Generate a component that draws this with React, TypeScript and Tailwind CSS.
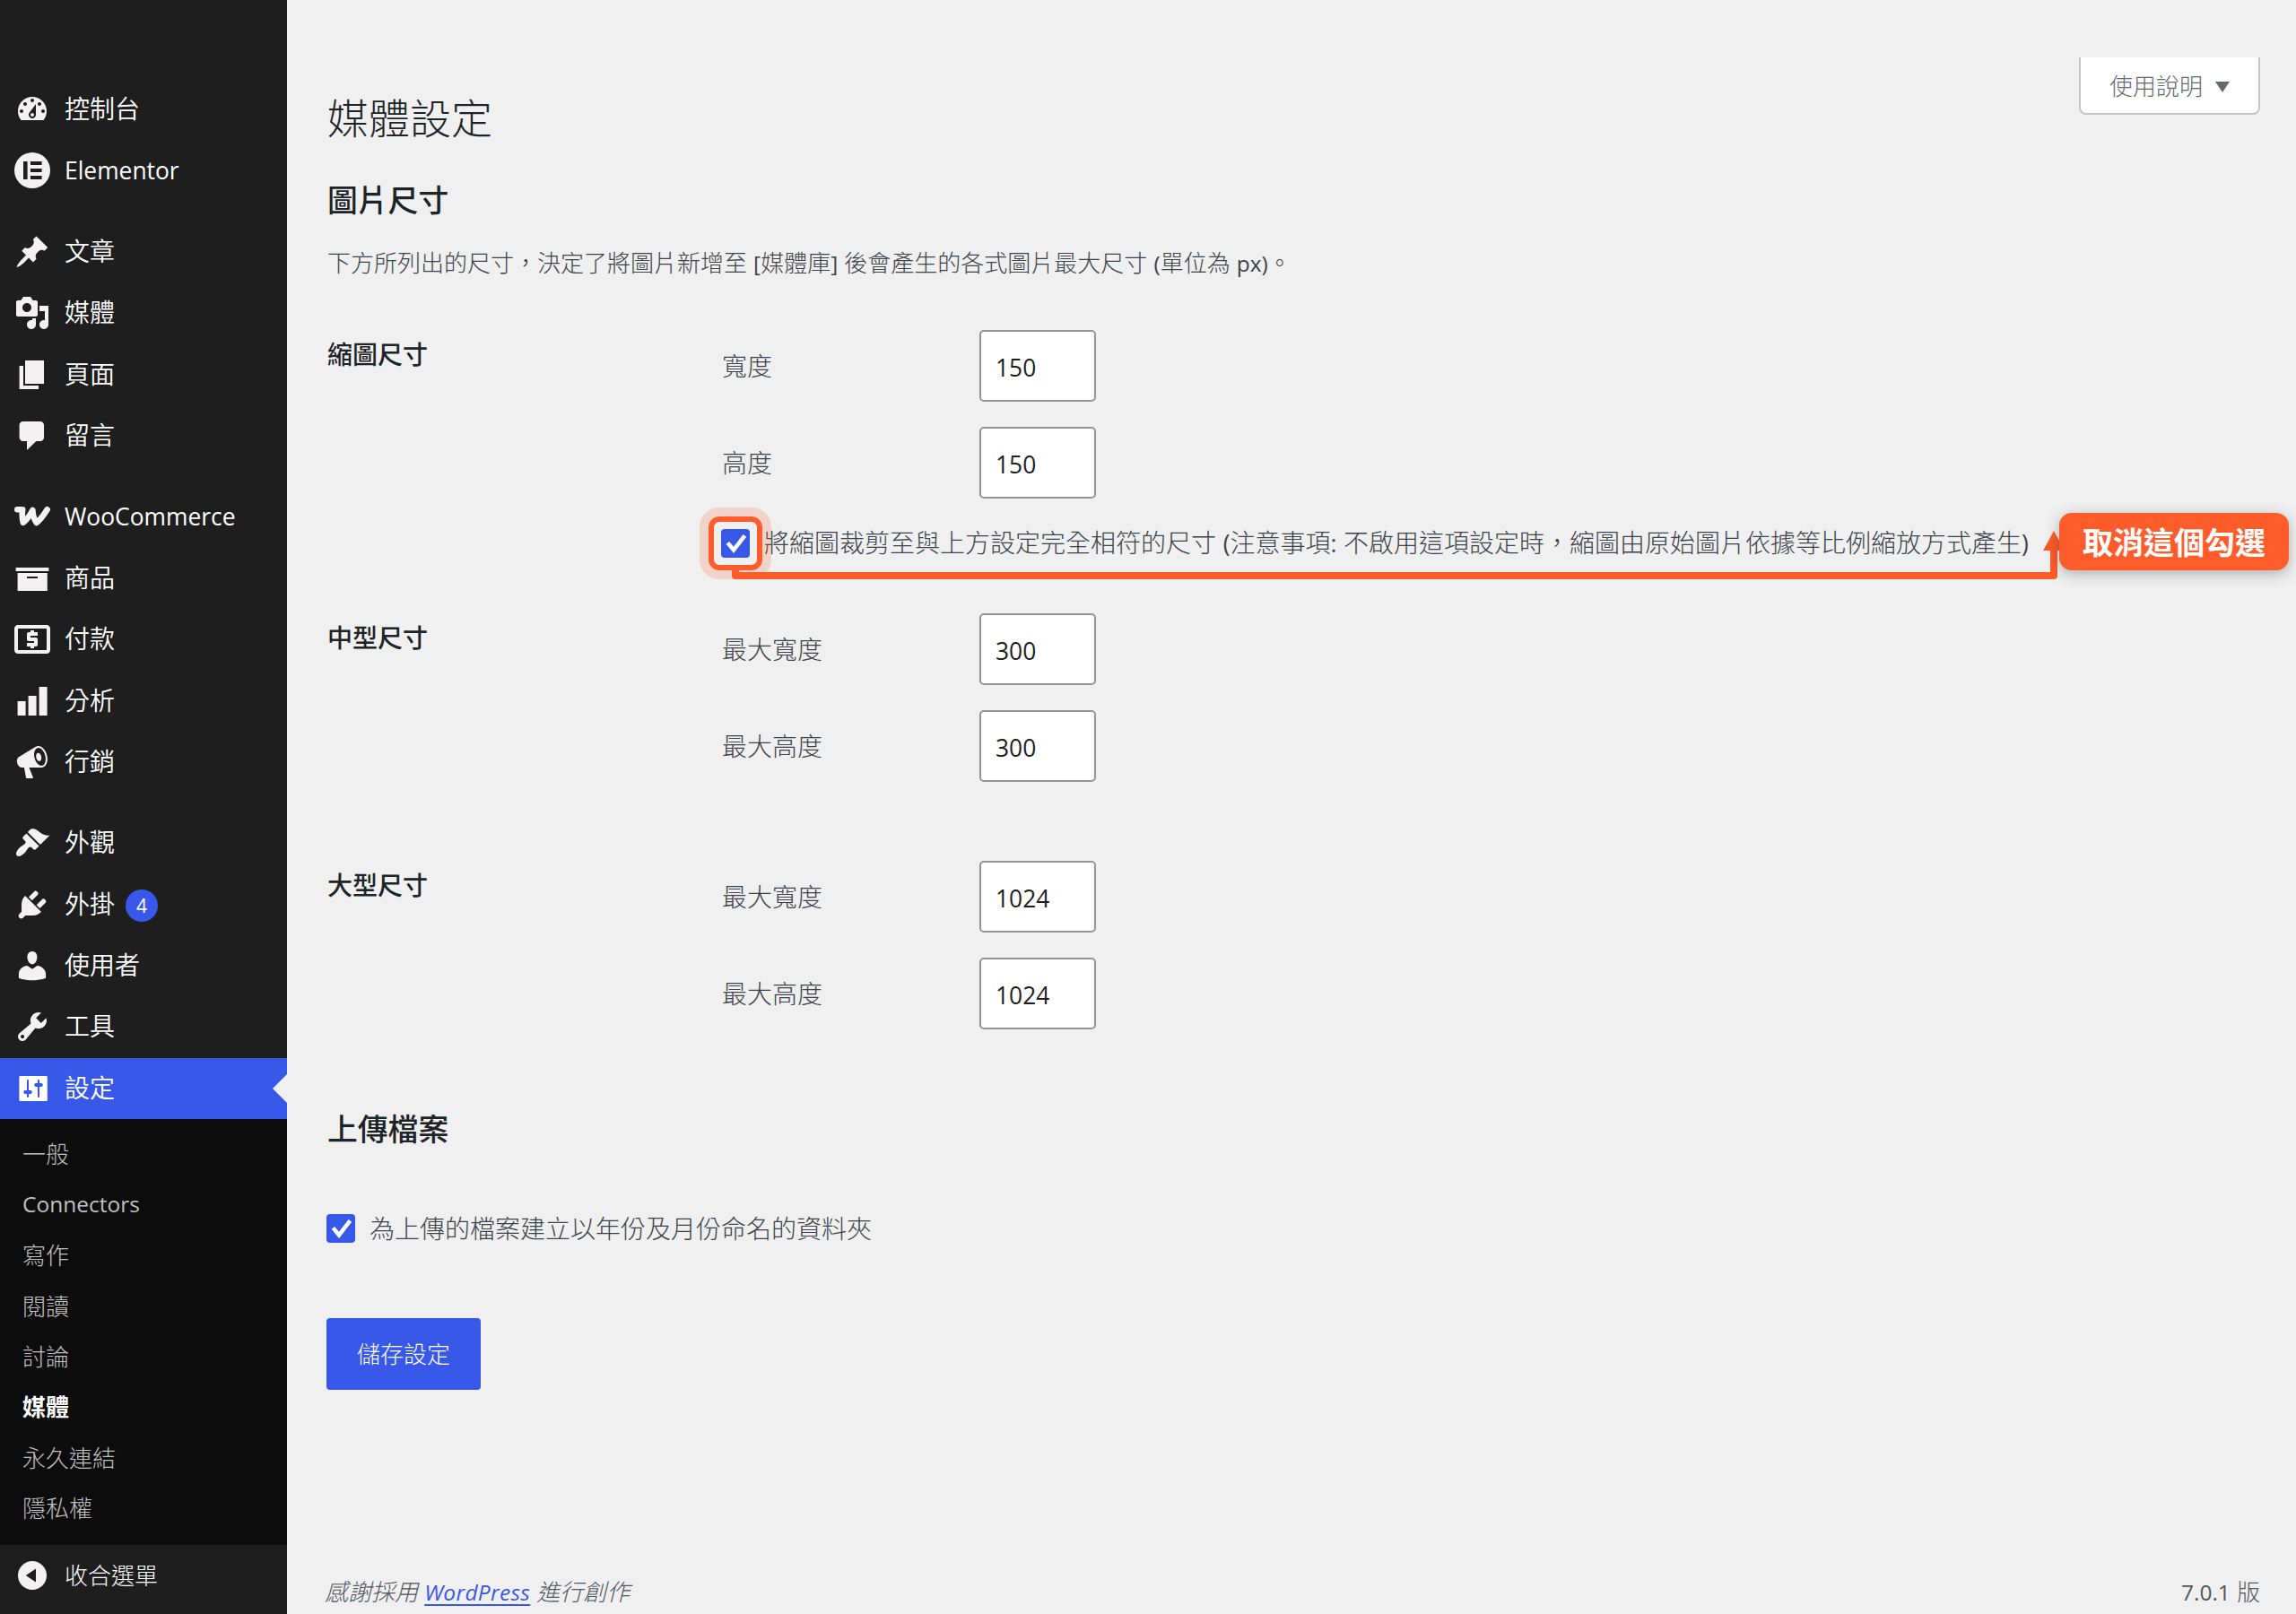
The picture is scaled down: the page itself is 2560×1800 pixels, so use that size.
import React from "react";

const ICONS: Record<string, string> = {
  dashboard:
    "M3.76 16h12.48c1.1-1.37 1.76-3.11 1.76-5 0-4.42-3.58-8-8-8s-8 3.58-8 8c0 1.89.66 3.63 1.76 5zM10 4c.55 0 1 .45 1 1s-.45 1-1 1-1-.45-1-1 .45-1 1-1zM6 6c.55 0 1 .45 1 1s-.45 1-1 1-1-.45-1-1 .45-1 1-1zm8 0c.55 0 1 .45 1 1s-.45 1-1 1-1-.45-1-1 .45-1 1-1zm-5.37 5.55L12 7v6c0 1.1-.9 2-2 2s-2-.9-2-2c0-.57.24-1.08.63-1.45zM4 10c.55 0 1 .45 1 1s-.45 1-1 1-1-.45-1-1 .45-1 1-1zm12 0c.55 0 1 .45 1 1s-.45 1-1 1-1-.45-1-1 .45-1 1-1zm-5 3c0-.55-.45-1-1-1s-1 .45-1 1 .45 1 1 1 1-.45 1-1z",
  elementor:
    "M10 0a10 10 0 1 0 0 20 10 10 0 0 0 0-20zM5 5h2.3v10H5zM9 5h6.3v2H9zM9 9h6.3v2H9zM9 13h6.3v2H9z",
  post: "M10.44 3.02l1.82-1.82 6.36 6.35-1.83 1.82c-1.05-.68-2.48-.57-3.41.36l-.75.75c-.92.93-1.04 2.35-.35 3.41l-1.83 1.82-2.41-2.41-2.8 2.79c-.42.42-3.38 2.71-3.8 2.29s1.86-3.39 2.28-3.81l2.79-2.79L4.1 9.36l1.83-1.82c1.05.69 2.48.57 3.4-.36l.75-.75c.93-.92 1.05-2.35.36-3.41z",
  media:
    "M13 11V4c0-.55-.45-1-1-1h-1.67L9 1H5L3.67 3H2c-.55 0-1 .45-1 1v7c0 .55.45 1 1 1h10c.55 0 1-.45 1-1zM7 4.5c1.38 0 2.5 1.12 2.5 2.5S8.38 9.5 7 9.5 4.5 8.38 4.5 7 5.62 4.5 7 4.5zM14 6h5v10.5c0 1.38-1.12 2.5-2.5 2.5S14 17.88 14 16.5s1.12-2.5 2.5-2.5c.17 0 .34.02.5.05V9h-3V6zm-4 8.05V13h2v3.5c0 1.38-1.12 2.5-2.5 2.5S7 17.88 7 16.5 8.12 14 9.5 14c.17 0 .34.02.5.05z",
  page: "M6 15V2h10.5v13H6zm-1 1h8.5v2H2.8V5H5v11z",
  comments:
    "M4.8 2h9.7c1.1 0 2 .9 2 2v7c0 1.1-.9 2-2 2h-2.3l-5.2 5v-5H4.8c-1.1 0-2-.9-2-2V4c0-1.1.9-2 2-2z",
  archive: "M19.2 4v2H.8V4h18.4zM1.8 7h16.6v10H1.8V7zm11.2 3V9H7v1h6z",
  chart: "M18.3 18V2h-4.5v16h4.5zm-6 0V7H7.8v11h4.5zm-6 0v-8H1.8v8h4.5z",
  megaphone:
    "M18.15 5.94c.46 1.62.38 3.22-.02 4.48-.42 1.28-1.26 2.18-2.3 2.48-.16.06-.26.06-.4.06-.06.02-.12.02-.18.02-.06.02-.14.02-.22.02h-6.8l2.22 5.5c.02.14-.06.26-.14.34-.08.1-.24.16-.34.16H6.95c-.1 0-.26-.06-.34-.16-.08-.08-.16-.2-.14-.34l-1-5.5H4.25l-.02-.02c-.5.06-1.08-.18-1.54-.62s-.88-1.08-1.06-1.88c-.24-.8-.2-1.56-.02-2.2.18-.62.58-1.08 1.06-1.3l.02-.02 9-5.4c.1-.06.18-.1.24-.16.06-.04.14-.08.24-.12.16-.08.28-.12.5-.18 1.04-.3 2.24.1 3.22.98s1.84 2.24 2.26 3.86zm-2.58 5.98h-.02c.4-.1.74-.34 1.04-.7.58-.7.86-1.76.86-3.04 0-.64-.1-1.3-.28-1.98-.34-1.36-1.02-2.5-1.78-3.24s-1.68-1.1-2.46-.88c-.82.22-1.4.96-1.7 2-.32 1.04-.28 2.36.06 3.72.38 1.36 1 2.5 1.8 3.24.78.74 1.62 1.1 2.48.88zm-2.54-7.08c.22-.04.42-.02.62.04.38.16.76.48 1.02 1s.42 1.2.42 1.78c0 .3-.04.56-.12.8-.18.48-.44.84-.86.94-.34.1-.8-.06-1.14-.4s-.64-.86-.78-1.5c-.18-.62-.12-1.24.02-1.72s.48-.84.82-.94z",
  appearance:
    "M14.48 11.06L7.41 3.99l1.5-1.5c.5-.56 2.3-.47 3.51.32 1.21.8 1.43 1.28 2.91 2.1 1.18.64 2.45 1.26 4.45.85zm-.71.71L6.7 4.7 4.93 6.47c-.39.39-.39 1.02 0 1.41l1.06 1.06c.39.39.39 1.03 0 1.42-.6.6-1.43 1.11-2.21 1.69-.35.26-.7.53-1.01.84C1.43 14.23.4 16.08 1.4 17.07c.99 1 2.84-.03 4.18-1.36.31-.31.58-.66.85-1.02.57-.78 1.08-1.61 1.69-2.21.39-.39 1.02-.39 1.41 0l1.06 1.06c.39.39 1.02.39 1.41 0z",
  plugins:
    "M13.11 4.36L9.87 7.6 8 5.73l3.24-3.24c.35-.34 1.05-.2 1.56.32.52.51.66 1.21.31 1.55zm-8 1.77l.91-1.12 9.01 9.01-1.19.84c-.71.71-2.63 1.16-3.82 1.16H6.14L4.9 17.26c-.59.59-1.54.59-2.12 0-.59-.58-.59-1.53 0-2.12l1.24-1.24v-3.88c0-1.13.4-3.19 1.09-3.89zm7.26 3.97l3.24-3.24c.34-.35 1.04-.21 1.55.31.52.51.66 1.21.31 1.55l-3.24 3.25z",
  users:
    "M10 9.25c-2.27 0-2.73-3.44-2.73-3.44C7 4.02 7.82 2 9.97 2c2.16 0 2.98 2.02 2.71 3.81 0 0-.41 3.44-2.68 3.44zm0 2.57L12.72 10c2.39 0 4.82 2.33 4.82 4.53v2.49s-3.95 1.13-7.54 1.13c-3.65 0-7.54-1.13-7.54-1.13v-2.49c0-2.25 2.24-4.48 4.77-4.48z",
  tools:
    "M16.68 9.77c-1.34 1.34-3.3 1.67-4.95.99l-5.41 6.52c-.99.99-2.59.99-3.58 0s-.99-2.59 0-3.57l6.52-5.42c-.68-1.65-.35-3.61.99-4.95 1.28-1.28 3.12-1.62 4.72-1.06l-2.89 2.89 2.82 2.82 2.86-2.87c.53 1.58.18 3.39-1.08 4.65zM3.81 16.21c.4.39 1.04.39 1.43 0 .4-.4.4-1.04 0-1.43-.39-.4-1.03-.4-1.43 0-.39.39-.39 1.03 0 1.43z",
};

function MenuIcon({ name }: { name: string }) {
  if (name === "payments") {
    return (
      <svg viewBox="2 2 20 20" className="size-10 fill-[#f3f1f1]">
        <path d="M11 17h2v-1h1c.55 0 1-.45 1-1v-3c0-.55-.45-1-1-1h-3v-1h4V8h-2V7h-2v1h-1c-.55 0-1 .45-1 1v3c0 .55.45 1 1 1h3v1H9v2h2v1zm9-13H4c-1.11 0-1.99.89-1.99 2L2 18c0 1.11.89 2 2 2h16c1.11 0 2-.89 2-2V6c0-1.11-.89-2-2-2zm0 14H4V6h16v12z" />
      </svg>
    );
  }
  if (name === "woo") {
    return (
      <svg viewBox="0 0 40 40" className="size-10 fill-none stroke-[#f3f1f1]" strokeLinecap="round" strokeLinejoin="round" strokeWidth="6.6">
        <path d="M3.3 12.3H9.2Q8 19 9.8 26.8Q15 23 20.4 13Q20.6 21 24.6 27Q30 23 36.6 12.3" />
      </svg>
    );
  }
  if (name === "settings") {
    return (
      <svg viewBox="0 0 40 40" className="size-10">
        <rect x="5.4" y="6" width="31.4" height="28" rx="1.2" fill="#fff" />
        <g fill="#3858e9">
          <rect x="14" y="10" width="2" height="20" rx="1" />
          <rect x="26" y="10" width="2" height="20" rx="1" />
          <rect x="10.2" y="22" width="9.6" height="4" rx="2" />
          <rect x="22.2" y="14" width="9.6" height="4" rx="2" />
        </g>
      </svg>
    );
  }
  if (name === "collapse") {
    return (
      <svg viewBox="0 0 40 40" className="size-10">
        <circle cx="20" cy="20" r="16" fill="#f3f1f1" />
        <path d="M24 12.6v14.8L12.8 20z" fill="#1e1e1e" />
      </svg>
    );
  }
  return (
    <svg viewBox="0 0 20 20" className="size-10 fill-[#f3f1f1]" fillRule="evenodd">
      <path d={ICONS[name]} />
    </svg>
  );
}

/** Renders Latin runs in a Latin face and leaves CJK runs in the inherited one. */
function Mixed({ text }: { text: string }) {
  const parts = text.split(/([\x20-\x7e]+)/);
  return (
    <>
      {parts.map((part, i) =>
        i % 2 === 1 ? (
          <span key={i} className="font-['Open_Sans'] text-[0.943em] leading-none font-normal whitespace-pre [word-spacing:0.03em]">
            {part}
          </span>
        ) : (
          part
        ),
      )}
    </>
  );
}

type Item = { icon: string; label: string; badge?: number };

const GROUPS: Item[][] = [
  [
    { icon: "dashboard", label: "控制台" },
    { icon: "elementor", label: "Elementor" },
  ],
  [
    { icon: "post", label: "文章" },
    { icon: "media", label: "媒體" },
    { icon: "page", label: "頁面" },
    { icon: "comments", label: "留言" },
  ],
  [
    { icon: "woo", label: "WooCommerce" },
    { icon: "archive", label: "商品" },
    { icon: "payments", label: "付款" },
    { icon: "chart", label: "分析" },
    { icon: "megaphone", label: "行銷" },
  ],
  [
    { icon: "appearance", label: "外觀" },
    { icon: "plugins", label: "外掛", badge: 4 },
    { icon: "users", label: "使用者" },
    { icon: "tools", label: "工具" },
  ],
];

const SUBMENU = ["一般", "Connectors", "寫作", "閱讀", "討論", "媒體", "永久連結", "隱私權"];

function MenuRow({ icon, label, badge }: Item) {
  return (
    <a className="flex h-[68.4px] items-start text-[28px] leading-[36px] font-[350] text-white">
      <span className="w-[72px] shrink-0 pt-3.5 pl-4">
        <MenuIcon name={icon} />
      </span>
      <span className="pt-[14px]">
        <Mixed text={label} />
      </span>
      {badge !== undefined && (
        <span className="mt-[17px] ml-3 flex size-9 items-center justify-center rounded-full bg-[#3858e9] font-['Open_Sans'] text-[21px] font-normal">
          {badge}
        </span>
      )}
    </a>
  );
}

function Sidebar() {
  return (
    <aside className="flex h-[1800px] w-80 shrink-0 flex-col bg-[#1e1e1e] pt-[88px]">
      <nav className="flex flex-col gap-[22px]">
        {GROUPS.map((group, i) => (
          <div key={i}>
            {group.map((item) => (
              <MenuRow key={item.label} {...item} />
            ))}
          </div>
        ))}
      </nav>
      <div className="relative bg-[#3858e9]">
        <MenuRow icon="settings" label="設定" />
        <span className="absolute top-[18px] right-0 border-y-[16px] border-r-[16px] border-y-transparent border-r-[#f0f0f0]" />
      </div>
      <div className="bg-[#0c0c0c] pt-2.5 pb-3.5">
        {SUBMENU.map((label) => (
          <a
            key={label}
            className={
              label === "媒體"
                ? "flex h-[56.4px] items-center pl-[25px] text-[26px] leading-[36px] font-bold text-white"
                : "flex h-[56.4px] items-center pl-[25px] text-[26px] leading-[36px] font-light text-[#c0c0c0]"
            }
          >
            <Mixed text={label} />
          </a>
        ))}
      </div>
      <a className="flex items-start text-[26px] leading-[36px] font-light text-white">
        <span className="w-[72px] shrink-0 pt-3.5 pl-4">
          <MenuIcon name="collapse" />
        </span>
        <span className="pt-[15px]">收合選單</span>
      </a>
    </aside>
  );
}

function Checkbox() {
  return (
    <span className="flex size-8 shrink-0 items-center justify-center rounded-[4px] bg-[#3858e9]">
      <svg viewBox="0 0 32 32" className="size-8 fill-none stroke-white" strokeWidth="4.6">
        <path d="M7.4 15.4L14 23.4L26.4 7.4" />
      </svg>
    </span>
  );
}

function SizeField({ label, value }: { label: string; value: string }) {
  return (
    <label className="flex h-20 w-[418px] items-center justify-between">
      <span className="pb-[3px] pl-px font-light">{label}</span>
      <input
        defaultValue={value}
        className="h-20 w-[130px] rounded-[5px] border-2 border-[#949494] bg-white px-4 pt-[3px] font-['Open_Sans'] text-[26.4px] text-[#1e1e1e] outline-none"
      />
    </label>
  );
}

function SizeRow({
  title,
  fields,
  className,
  children,
}: {
  title: string;
  fields: [string, string][];
  className: string;
  children?: React.ReactNode;
}) {
  return (
    <div className={className}>
      <h3 className="w-[440px] shrink-0 pt-[6px] pl-px text-[28px] leading-[40px] font-medium text-[#1d2327]">{title}</h3>
      <div className="flex flex-col gap-7">
        {fields.map(([label, value]) => (
          <SizeField key={label} label={label} value={value} />
        ))}
        {children}
      </div>
    </div>
  );
}

function CropOption() {
  return (
    <div className="relative mt-[6px] flex h-8 items-center whitespace-nowrap">
      <Checkbox />
      <span className="ml-4 pb-1 font-light">
        <Mixed text="將縮圖裁剪至與上方設定完全相符的尺寸 (注意事項: 不啟用這項設定時，縮圖由原始圖片依據等比例縮放方式產生)" />
      </span>
      <span className="absolute -top-6 -left-6 size-20 rounded-[22px] border-[10px] border-[#ff5c2c]/20" />
      <span className="absolute -top-3.5 -left-3.5 size-[60px] rounded-[12px] border-6 border-[#ff5c2c]" />
      <svg viewBox="0 0 1512 70" className="absolute top-0 left-0 h-[70px] w-[1512px] overflow-visible">
        <path d="M16 45V52H1486V20" fill="none" stroke="#ff5c2c" strokeWidth="8" strokeLinejoin="round" />
        <path d="M1474 24L1486 2L1498 24z" fill="#ff5c2c" />
      </svg>
      <span className="absolute -top-[18px] left-[1492px] flex h-16 w-64 items-center justify-center rounded-[14px] bg-[#ff5c2c] text-[34px] leading-none font-bold text-white shadow-[0_4px_16px_rgba(0,0,0,0.28)]">
        取消這個勾選
      </span>
    </div>
  );
}

export default function App() {
  return (
    <div className="flex h-[1800px] w-[2560px] overflow-hidden bg-[#f0f0f0] font-['Noto_Sans_CJK_TC',sans-serif] text-[28px] text-[#3c434a]">
      <Sidebar />
      <main className="flex flex-1 flex-col pt-16 pr-10 pl-11">
        <header className="flex h-[118px] items-start justify-between">
          <h1 className="pt-8 pl-px text-[46px] leading-[66px] font-light text-[#1d2327]">媒體設定</h1>
          <button className="flex h-16 w-[202px] items-center rounded-b-[8px] border-2 border-t-0 border-[#c3c4c7] bg-white pb-0.5 pl-8 text-[26px] font-light text-[#646970]">
            使用說明
            <svg viewBox="0 0 16 12" className="mt-1.5 ml-3.5 h-3 w-4 fill-[#646970]">
              <path d="M0 0h16L8 12z" />
            </svg>
          </button>
        </header>

        <h2 className="mt-[18px] pl-px text-[33.8px] leading-[44px] font-medium text-[#1d2327]">圖片尺寸</h2>
        <p className="mt-7 h-[42px] pl-px text-[26px] leading-[40px] font-light">
          <Mixed text="下方所列出的尺寸，決定了將圖片新增至 [媒體庫] 後會產生的各式圖片最大尺寸 (單位為 px)。" />
        </p>

        <SizeRow
          className="mt-[54px] flex h-[316px]"
          title="縮圖尺寸"
          fields={[
            ["寬度", "150"],
            ["高度", "150"],
          ]}
        >
          <CropOption />
        </SizeRow>
        <SizeRow
          className="flex h-[276px]"
          title="中型尺寸"
          fields={[
            ["最大寬度", "300"],
            ["最大高度", "300"],
          ]}
        />
        <SizeRow
          className="flex h-[276px]"
          title="大型尺寸"
          fields={[
            ["最大寬度", "1024"],
            ["最大高度", "1024"],
          ]}
        />

        <h2 className="pl-px text-[33.8px] leading-[44px] font-medium text-[#1d2327]">上傳檔案</h2>
        <label className="mt-[74px] flex h-8 items-center">
          <Checkbox />
          <span className="ml-4 pb-[3px] font-light">為上傳的檔案建立以年份及月份命名的資料夾</span>
        </label>
        <button className="mt-[84px] flex h-20 w-[172px] items-center justify-center rounded-[4px] bg-[#3858e9] pb-[3px] text-[26px] font-light text-white">
          儲存設定
        </button>

        <footer className="mt-auto mb-1.5 flex justify-between text-[26px] leading-[40px] font-light text-[#50575e]">
          <p className="-ml-0.5 italic">
            感謝採用
            <Mixed text=" " />
            <a className="tracking-[0.3px] text-[#3858e9] underline decoration-2 underline-offset-4">
              <Mixed text="WordPress" />
            </a>
            <Mixed text=" 進行創作" />
          </p>
          <p>
            <Mixed text="7.0.1 版" />
          </p>
        </footer>
      </main>
    </div>
  );
}
